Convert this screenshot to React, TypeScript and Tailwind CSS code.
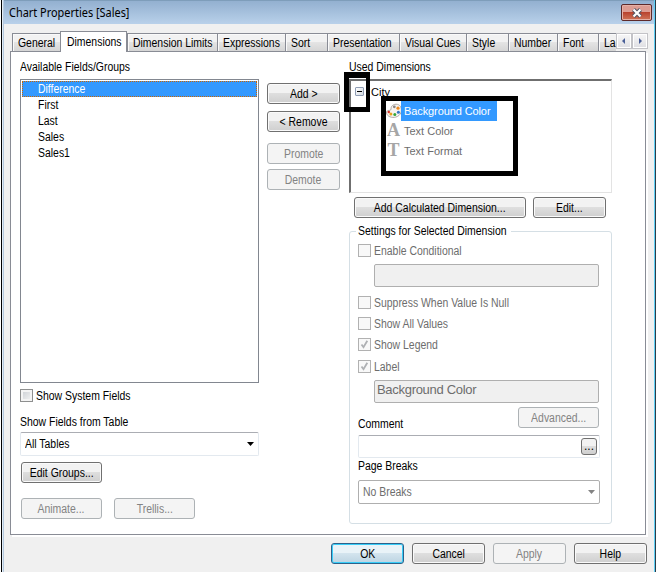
import type { ReactNode } from "react";
import clsx from "clsx";

interface TextProps {
    children: ReactNode;
    className?: string;
}

// Condensed dialog font. Scaled horizontally around its own start or centre.
const Text = ({ children, className = "origin-left" }: TextProps) => (
    <span className={clsx("inline-block whitespace-nowrap scale-x-[0.87]", className)}>{children}</span>
);

interface ButtonProps {
    children: ReactNode;
    size?: string;
    disabled?: boolean;
    primary?: boolean;
}

const Button = ({ children, size = "w-[73px]", disabled, primary }: ButtonProps) => (
    <button
        disabled={disabled}
        className={clsx(
            "flex h-[21px] shrink-0 items-center justify-center rounded-[3px] border",
            size,
            disabled && "border-[#adb2b5] bg-[#f4f4f4] text-[#838383]",
            primary && "border-[#2c628b] bg-linear-to-b from-[#e9f3f8] from-45% via-[#d3e4ee] via-50% to-[#bcd4e2] shadow-[inset_0_0_0_1px_#38cdf8]",
            !disabled && !primary && "border-[#707070] bg-linear-to-b from-[#f2f2f2] from-45% via-[#dedede] via-50% to-[#cfcfcf] shadow-[inset_0_0_0_1px_#fafafa]"
        )}
    >
        <Text className="origin-center">{children}</Text>
    </button>
);

interface CheckboxProps {
    label: string;
    checked?: boolean;
    disabled?: boolean;
}

const Checkbox = ({ label, checked, disabled }: CheckboxProps) => (
    <label className={clsx("flex h-[13px] items-center gap-[3px]", disabled && "text-[#6d6d6d]")}>
        <span
            className={clsx(
                "flex h-[13px] w-[13px] shrink-0 items-center justify-center border",
                disabled ? "border-[#b1b1b1] bg-[#f8f8f8]" : "border-[#8e8f8f] bg-linear-to-br from-[#c9cdd2] to-[#f6f6f6] shadow-[inset_0_0_0_2px_#f4f4f4]"
            )}
        >
            {checked && (
                <svg width="9" height="9" viewBox="0 0 9 9" fill="none" stroke="#aeb0b3" strokeWidth="1.8">
                    <path d="M1.5 4.5 3.5 7.2 7.3 0.8" />
                </svg>
            )}
        </span>
        <Text>{label}</Text>
    </label>
);

const tabs = [
    { name: "General", size: "w-[48px]" },
    { name: "Dimensions", size: "w-[67px]", active: true },
    { name: "Dimension Limits", size: "w-[90px]" },
    { name: "Expressions", size: "w-[68px]" },
    { name: "Sort", size: "w-[42px]" },
    { name: "Presentation", size: "w-[72px]" },
    { name: "Visual Cues", size: "w-[67px]" },
    { name: "Style", size: "w-[42px]" },
    { name: "Number", size: "w-[49px]" },
    { name: "Font", size: "w-[41px]" },
    { name: "La", size: "w-[18px]" },
];

const fields = ["Difference", "First", "Last", "Sales", "Sales1"];

const PaletteIcon = () => (
    <svg className="shrink-0" width="16" height="16" viewBox="0 0 16 16">
        <path d="M5.6 3.4C7.5.6 12.6.3 14.6 3.6c2.2 4.2 0 9.2-4.8 10.5-4 1.1-8.7-.6-9.2-4C.4 7.6 2 7.4 3.8 7.3 5.8 7.2 4.4 5.2 5.6 3.4z" fill="#f7f3ef" stroke="#a8a29d" strokeWidth=".9" />
        <circle cx="8.3" cy="3.8" r="1.4" fill="#8b8580" />
        <circle cx="12" cy="5.2" r="1.6" fill="#ee8a1d" />
        <circle cx="12.4" cy="9.2" r="1.5" fill="#3575c4" />
        <circle cx="8.8" cy="11.6" r="1.5" fill="#35a63b" />
        <circle cx="4.9" cy="11" r="1.5" fill="#e8a21c" />
        <circle cx="2.8" cy="9" r="1.2" fill="#d8352a" />
    </svg>
);

const LetterIcon = ({ children }: { children: string }) => (
    <span className="-mt-[2px] w-[15px] text-center font-['Liberation_Serif',serif] text-[18px] leading-[20px] font-bold text-[#a6a6a6]">{children}</span>
);

const TitleBar = () => (
    <div className="flex h-[24px] shrink-0 items-start justify-between border-t border-[#7e9dba] bg-linear-to-b from-[#93b0d0] to-[#b9d1ea] pr-[2px] pl-[5px]">
        <span className="origin-left scale-x-[0.91] pt-[3px] font-['Noto_Sans',sans-serif] text-[12px] leading-[17px] whitespace-nowrap">Chart Properties [Sales]</span>
        <span className="mt-[3px] flex h-[17px] w-[31px] items-center justify-center rounded-[2px] border border-[#5e2a2a] bg-linear-to-b from-[#dd9c92] from-45% via-[#b9432f] via-50% to-[#cf7358] shadow-[inset_0_0_0_1px_#e5b0a6]">
            <svg width="12" height="10" viewBox="0 0 12 10">
                <path d="M2.5 1.5 9.5 8.5M9.5 1.5 2.5 8.5" stroke="#535666" strokeWidth="4.2" />
                <path d="M2.5 1.5 9.5 8.5M9.5 1.5 2.5 8.5" stroke="#fff" strokeWidth="2.2" />
            </svg>
        </span>
    </div>
);

const TabBar = () => (
    <div className="flex h-[20px] shrink-0 items-end pl-[8px]">
        {tabs.map((tab) => (
            <div
                key={tab.name}
                className={clsx(
                    "flex shrink-0 overflow-hidden border-[#898c95]",
                    tab.size,
                    tab.active
                        ? "z-10 -mb-px h-[21px] border-x border-t bg-white pt-[2px] pl-[6px]"
                        : "h-[18px] border-t border-l bg-linear-to-b from-[#f2f2f2] from-45% via-[#e4e4e4] via-50% to-[#d5d5d5] pt-px pl-[5px] shadow-[inset_1px_1px_0_#fafafa]"
                )}
            >
                <Text>{tab.name}</Text>
            </div>
        ))}
        <div className="flex h-[18px]">
            {["M6 2v6L3 5z", "M4 2v6l3-3z"].map((d) => (
                <span key={d} className="flex h-[16px] w-[16px] items-center justify-center border border-[#c3c3c7] bg-linear-to-b from-[#f7f7f7] to-[#dedee2] shadow-[inset_0_0_0_1px_#fff]">
                    <svg width="10" height="10" viewBox="0 0 10 10">
                        <path d={d} fill="#4a5f97" />
                    </svg>
                </span>
            ))}
        </div>
    </div>
);

const AvailableFields = () => (
    <div className="w-[239px] shrink-0">
        <div className="h-[20px]"><Text>Available Fields/Groups</Text></div>
        <ul className="h-[304px] border border-[#828790] p-px">
            {fields.map((field, i) => (
                <li
                    key={field}
                    className={clsx("flex h-[16px] items-center", i === 0 ? "border border-dotted border-[#cc6600] bg-[#3399ff] pl-[15px] text-white" : "pl-[16px]")}
                >
                    <Text>{field}</Text>
                </li>
            ))}
        </ul>
        <div className="mt-[6px]"><Checkbox label="Show System Fields" /></div>
        <div className="mt-[12px] h-[18px]"><Text>Show Fields from Table</Text></div>
        <div className="flex h-[24px] items-center justify-between rounded-[2px] border border-[#e3e9ef] border-t-[#abadb3] pr-[4px] pl-[4px]">
            <Text>All Tables</Text>
            <svg width="7" height="4" viewBox="0 0 7 4"><path d="M0 0h7L3.5 4z" /></svg>
        </div>
        <div className="mt-[6px] pl-px"><Button size="w-[81px]">Edit Groups...</Button></div>
        <div className="mt-[15px] flex gap-[12px] pl-px">
            <Button size="w-[81px]" disabled>Animate...</Button>
            <Button size="w-[81px]" disabled>Trellis...</Button>
        </div>
    </div>
);

const DimensionTree = () => (
    <div className="relative h-[114px] border-t-2 border-r border-b border-l-2 border-[#e3e3e3] border-t-[#6f6f6f] border-l-[#6f6f6f] pt-px font-['Liberation_Sans',Arial,sans-serif] text-[11px]">
        <div className="flex h-[19px] items-center">
            <span className="ml-[4px] flex h-[9px] w-[9px] items-center justify-center rounded-[1px] border border-[#8f9db5] bg-linear-to-br from-white to-[#d5dbe2]">
                <span className="h-px w-[5px] bg-black" />
            </span>
            <span className="ml-[7px]">City</span>
        </div>
        <div className="ml-[35px] text-[#6d6d6d]">
            <div className="flex h-[20px] items-center">
                <PaletteIcon />
                <span className="ml-[-1px] flex h-[20px] w-[96px] items-center bg-[#3399ff] pl-[3px] tracking-[-0.1px] whitespace-nowrap text-white">Background Color</span>
            </div>
            <div className="flex h-[20px] items-center">
                <LetterIcon>A</LetterIcon>
                <span className="ml-[3px]">Text Color</span>
            </div>
            <div className="flex h-[20px] items-center">
                <LetterIcon>T</LetterIcon>
                <span className="ml-[3px]">Text Format</span>
            </div>
        </div>
        {/* marker frames drawn over the tree */}
        <div className="absolute top-[-9px] left-[-7px] h-[40px] w-[26px] border-t-[6px] border-r-[4px] border-b-[5px] border-l-[5px] border-black" />
        <div className="absolute top-[15px] left-[30px] h-[80px] w-[137px] border-[5px] border-black" />
    </div>
);

const DimensionSettings = () => (
    <fieldset className="mt-[5px] h-[301px] min-w-0 rounded-[3px] border border-[#d5dfe5] pr-[12px] pl-[8px]">
        <legend className="-ml-[2px] h-[16px] w-[155px] pl-[2px]"><Text>Settings for Selected Dimension</Text></legend>
        <div className="mt-[5px]"><Checkbox label="Enable Conditional" disabled /></div>
        <div className="mt-[7px] ml-[16px] h-[23px] rounded-[2px] border border-[#afafaf] bg-[#f0f0f0]" />
        <div className="mt-[9px]"><Checkbox label="Suppress When Value Is Null" disabled /></div>
        <div className="mt-[8px]"><Checkbox label="Show All Values" disabled /></div>
        <div className="mt-[8px]"><Checkbox label="Show Legend" checked disabled /></div>
        <div className="mt-[9px]"><Checkbox label="Label" checked disabled /></div>
        <div className="mt-[7px] ml-[16px] flex h-[23px] items-center rounded-[2px] border border-[#afafaf] bg-[#f0f0f0] pb-[3px] pl-[2px] text-[13px] tracking-[-0.3px] text-[#6d6d6d]">
            Background Color
        </div>
        <div className="mt-[4px] flex h-[28px] items-start justify-between">
            <span className="pt-[9px]"><Text>Comment</Text></span>
            <Button size="w-[81px]" disabled>Advanced...</Button>
        </div>
        <div className="-mr-px flex h-[23px] items-center justify-end rounded-[2px] border border-[#e3e9ef] border-t-[#abadb3] pr-[2px]">
            <span className="flex h-[17px] w-[16px] items-end justify-center rounded-[3px] border border-[#707070] bg-linear-to-b from-[#f2f2f2] from-45% via-[#dedede] via-50% to-[#cfcfcf]">...</span>
        </div>
        <div className="h-[22px]"><Text>Page Breaks</Text></div>
        <div className="-mr-px flex h-[24px] items-center justify-between rounded-[2px] border border-[#afafaf] pr-[4px] pl-[4px] text-[#6d6d6d]">
            <Text>No Breaks</Text>
            <svg width="7" height="4" viewBox="0 0 7 4"><path d="M0 0h7L3.5 4z" fill="#838383" /></svg>
        </div>
    </fieldset>
);

export default function App() {
    return (
        <div className="flex h-[572px] w-[656px] overflow-hidden bg-[#f0f0f0] font-['Liberation_Sans',Arial,sans-serif] text-[12px] leading-[16px] text-black">
            <div className="flex w-[3px] shrink-0">
                <div className="w-px bg-white" />
                <div className="w-px bg-black" />
                <div className="w-px bg-[#e4edf6]" />
            </div>
            <div className="flex w-[651px] shrink-0 flex-col border-l border-[#b4c9de]">
                <TitleBar />
                <div className="flex grow flex-col pt-[7px] pr-px">
                    <TabBar />
                    <div className="ml-[6px] flex h-[484px] w-[636px] border border-[#898c95] bg-white pt-[7px] pl-[9px] shadow-[2px_2px_0_#fff]">
                        <AvailableFields />
                        <div className="mt-[24px] ml-[8px] shrink-0">
                            <Button>Add &gt;</Button>
                            <div className="mt-[7px]"><Button>&lt; Remove</Button></div>
                            <div className="mt-[11px]"><Button disabled>Promote</Button></div>
                            <div className="mt-[5px]"><Button disabled>Demote</Button></div>
                        </div>
                        <div className="ml-[9px] w-[263px] shrink-0">
                            <div className="h-[20px]"><Text>Used Dimensions</Text></div>
                            <DimensionTree />
                            <div className="mt-[4px] flex gap-[7px] pl-[5px]">
                                <Button size="w-[172px]">Add Calculated Dimension...</Button>
                                <Button>Edit...</Button>
                            </div>
                            <DimensionSettings />
                        </div>
                    </div>
                    <div className="mt-[8px] flex justify-end gap-[8px] pr-[6px]">
                        <Button primary>OK</Button>
                        <Button>Cancel</Button>
                        <Button disabled>Apply</Button>
                        <Button>Help</Button>
                    </div>
                </div>
            </div>
            <div className="w-[2px] shrink-0 border-r border-r-[#2a3d4a] bg-[#5fd0f5]" />
        </div>
    );
}
